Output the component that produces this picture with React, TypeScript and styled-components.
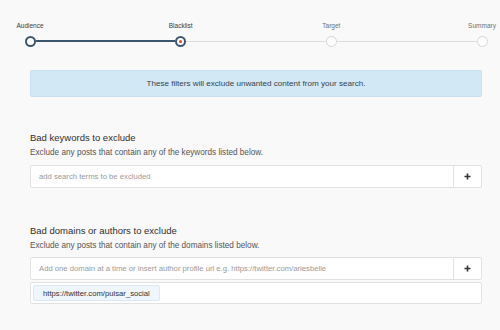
import React from 'react';
import styled, { createGlobalStyle, css } from 'styled-components';

const GlobalStyle = createGlobalStyle`
    html, body {
        margin: 0;
        padding: 0;
        background: #f9f9f9;
        font-family: 'Liberation Sans', Arial, sans-serif;
    }
`;

const Page = styled.div`
    width: 500px;
    height: 330px;
    overflow: hidden;
    background: #f9f9f9;
`;

const Stepper = styled.div`
    display: flex;
    padding: 22px 12.5px 0 24.5px;
`;

type StepState = 'done' | 'current' | 'todo';

const Step = styled.div`
    width: 11px;
    display: flex;
    flex-direction: column;
    align-items: center;
    flex-shrink: 0;
`;

const StepLabel = styled.span<{ $muted: boolean }>`
    font-size: 6.5px;
    line-height: 8px;
    white-space: nowrap;
    color: ${props => (props.$muted ? '#6f6f6f' : '#3a3a3a')};
    margin-bottom: 5.5px;
`;

const Dot = styled.span<{ $state: StepState }>`
    box-sizing: border-box;
    width: 11px;
    height: 11px;
    border-radius: 50%;
    background: #fff;
    display: flex;
    align-items: center;
    justify-content: center;
    border: 2px solid #3c5670;

    ${props =>
        props.$state === 'todo' &&
        css`
            border: 1.5px solid #d6d6d6;
        `}

    ${props =>
        props.$state === 'current' &&
        css`
            &::after {
                content: '';
                width: 3px;
                height: 3px;
                border-radius: 50%;
                background: #e0452b;
            }
        `}
`;

const Connector = styled.span<{ $done: boolean }>`
    flex: 1;
    align-self: flex-end;
    height: ${props => (props.$done ? '2px' : '1px')};
    margin-bottom: ${props => (props.$done ? '4.5px' : '5px')};
    background: ${props => (props.$done ? '#3c5670' : '#dcdcdc')};
`;

const Content = styled.div`
    padding: 0 18px 0 30px;
`;

const Notice = styled.div`
    margin-top: 23.5px;
    height: 27px;
    box-sizing: border-box;
    display: flex;
    align-items: center;
    justify-content: center;
    background: #d3e8f5;
    border: 1px solid #c8e1f1;
    border-radius: 2px;
    color: #34424d;
    font-size: 8.1px;
`;

const Section = styled.section<{ $gap: number }>`
    margin-top: ${props => props.$gap}px;
`;

const Heading = styled.h3`
    margin: 0;
    font-size: 9.5px;
    line-height: 12px;
    font-weight: normal;
    color: #2f2f2f;
`;

const Hint = styled.p`
    margin: 4px 0 0;
    font-size: 8.2px;
    line-height: 10px;
    color: #555;
`;

const Field = styled.div<{ $gap: number }>`
    margin-top: ${props => props.$gap}px;
    height: 23px;
    box-sizing: border-box;
    display: flex;
    background: #fff;
    border: 1px solid #e2e2e2;
    border-radius: 2px;
`;

const Input = styled.input`
    flex: 1;
    min-width: 0;
    border: none;
    outline: none;
    background: transparent;
    padding: 0 8px;
    font-family: inherit;
    font-size: 7.7px;
    color: #333;

    &::placeholder {
        color: #9a9a9a;
    }
`;

const AddButton = styled.button`
    width: 28px;
    flex-shrink: 0;
    border: none;
    border-left: 1px solid #e2e2e2;
    background: transparent;
    display: flex;
    align-items: center;
    justify-content: center;
    padding: 0;
    cursor: pointer;
`;

const TagBox = styled.div`
    margin-top: 2px;
    height: 22px;
    box-sizing: border-box;
    display: flex;
    align-items: center;
    padding: 0 2px;
    background: #fff;
    border: 1px solid #e2e2e2;
    border-radius: 2px;
`;

const Tag = styled.span`
    height: 16px;
    box-sizing: border-box;
    display: flex;
    align-items: center;
    padding: 0 9px;
    background: #eef5fb;
    border: 1px solid #dce9f4;
    border-radius: 2px;
    font-size: 7.7px;
    color: #333;
`;

const PlusIcon = () => (
    <svg width="7" height="7" viewBox="0 0 7 7">
        <path d="M3.5 0.5v6M0.5 3.5h6" stroke="#333" strokeWidth="1.6" />
    </svg>
);

const STEPS: { label: string; state: StepState }[] = [
    { label: 'Audience', state: 'done' },
    { label: 'Blacklist', state: 'current' },
    { label: 'Target', state: 'todo' },
    { label: 'Summary', state: 'todo' },
];

const App = () => (
    <Page>
        <GlobalStyle />
        <Stepper>
            {STEPS.map((step, i) => (
                <React.Fragment key={step.label}>
                    {i > 0 && <Connector $done={step.state !== 'todo'} />}
                    <Step>
                        <StepLabel $muted={step.state === 'todo'}>{step.label}</StepLabel>
                        <Dot $state={step.state} />
                    </Step>
                </React.Fragment>
            ))}
        </Stepper>
        <Content>
            <Notice>These filters will exclude unwanted content from your search.</Notice>

            <Section $gap={35}>
                <Heading>Bad keywords to exclude</Heading>
                <Hint>Exclude any posts that contain any of the keywords listed below.</Hint>
                <Field $gap={7}>
                    <Input placeholder="add search terms to be excluded" />
                    <AddButton>
                        <PlusIcon />
                    </AddButton>
                </Field>
            </Section>

            <Section $gap={37}>
                <Heading>Bad domains or authors to exclude</Heading>
                <Hint>Exclude any posts that contain any of the domains listed below.</Hint>
                <Field $gap={6}>
                    <Input placeholder="Add one domain at a time or insert author profile url e.g. https://twitter.com/ariesbelle" />
                    <AddButton>
                        <PlusIcon />
                    </AddButton>
                </Field>
                <TagBox>
                    <Tag>https://twitter.com/pulsar_social</Tag>
                </TagBox>
            </Section>
        </Content>
    </Page>
);

export default App;
